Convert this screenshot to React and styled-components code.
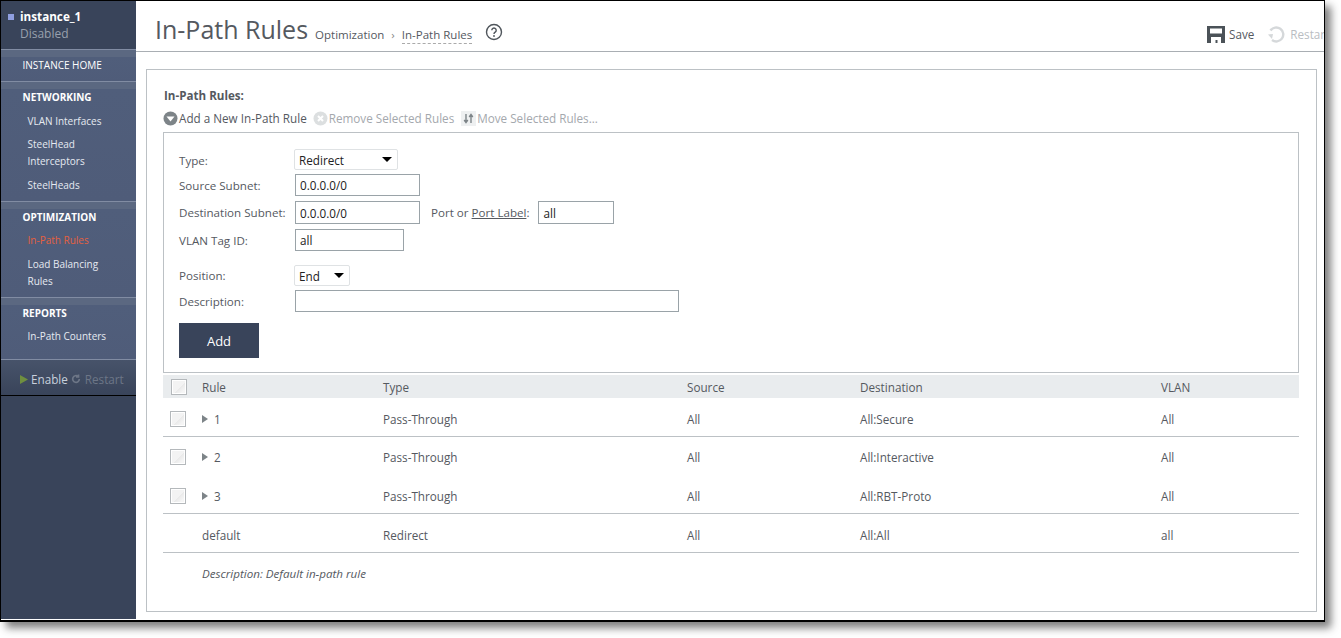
import React from "react";
import styled, { createGlobalStyle } from "styled-components";

const Global = createGlobalStyle`
  html, body { margin: 0; padding: 0; background: #fff; overflow: hidden; }
  body { font-family: "Open Sans", "Liberation Sans", sans-serif; color: #55595f; }
  * { box-sizing: border-box; }
`;

const Page = styled.div`
  width: 1341px;
  height: 638px;
`;
const Window = styled.div`
  width: 1325px;
  height: 622px;
  display: flex;
  background: #fff;
  border: 1px solid #000;
  border-bottom-width: 2px;
  box-shadow: 6px 6px 8px rgba(50, 50, 50, 0.62);
  overflow: hidden;
`;
const Sidebar = styled.aside`
  width: 135px;
  height: 618px;
  flex: none;
  background: #39445a;
  display: flex;
  flex-direction: column;
`;
const Instance = styled.div`
  height: 48px;
  padding: 7px 0 0 7px;
  line-height: 17px;
  background: #39445a;
  display: grid;
  grid-template-columns: 12px 1fr;
  align-content: start;
  align-items: center;
`;
const InstanceDot = styled.span`
  width: 6px;
  height: 6px;
  background: #8f9fe0;
`;
const InstanceName = styled.span`
  color: #fff;
  font-size: 11.7px;
  font-weight: 700;
`;
const InstanceState = styled.span`
  grid-column: 2;
  color: #98a0ad;
  font-size: 12px;
`;
const Section = styled.section`
  height: ${(p) => p.$h}px;
  border-top: 1px solid #818ca3;
  background: linear-gradient(#5b6881 0, #5b6881 7px, #505e7b 7px, #4f5c79 100%);
  padding-top: 7px;
  display: flex;
  flex-direction: column;
`;
const SectionHead = styled.div`
  height: 17px;
  line-height: 17px;
  padding-left: 21.5px;
  font-size: 10px;
  font-weight: ${(p) => (p.$plain ? 400 : 700)};
  color: #fff;
  margin-bottom: 6px;
`;
const NavItem = styled.div`
  margin-left: 26.5px;
  margin-top: ${(p) => p.$mt || 0}px;
  width: 90px;
  font-size: 10px;
  line-height: 17px;
  color: ${(p) => (p.$active ? "#e4603f" : "#e6eaf1")};
`;
const SideFooter = styled.div`
  height: 37px;
  border-top: 1px solid #818ca3;
  border-bottom: 1px solid #000;
  background: linear-gradient(#47536a, #39445a);
  display: flex;
  align-items: center;
  padding: 3px 0 0 19px;
  font-size: 11.7px;
  color: #c8d0dc;
  gap: 3px;
`;
const Muted = styled.span`
  margin-left: 1px;
  color: #6d7687;
`;
const SideFill = styled.div`
  flex: 1;
  background: #39445a;
`;
const Main = styled.main`
  flex: 1;
  min-width: 0;
  display: flex;
  flex-direction: column;
`;
const TopBar = styled.header`
  height: 51px;
  flex: none;
  border-bottom: 1px solid #a9aeb3;
  display: flex;
  align-items: flex-start;
  padding-left: 19px;
  white-space: nowrap;
`;
const Title = styled.h1`
  margin: 10px 0 0;
  font-size: 25px;
  line-height: 36px;
  font-weight: 400;
  color: #55595f;
`;
const Crumbs = styled.div`
  margin: 25px 0 0 7px;
  font-size: 11.5px;
  line-height: 17px;
  color: #55595f;
  display: flex;
`;
const CrumbSep = styled.span`
  margin: 0 7px;
  color: #888;
`;
const CrumbNow = styled.span`
  border-bottom: 1px dashed #aaa;
  height: 18px;
`;
const HelpIcon = styled.svg`
  width: 18px;
  height: 18px;
  margin: 22px 0 0 13px;
`;
const Actions = styled.div`
  margin: 24px 0 0 auto;
  display: flex;
  align-items: center;
  width: 117px;
  flex: none;
  overflow: hidden;
  font-size: 11.7px;
  line-height: 18px;
`;
const ActionIcon = styled.svg`
  width: 18px;
  height: 18px;
  flex: none;
`;
const SaveLabel = styled.span`
  margin: 0 13px 0 4px;
  color: #55595f;
`;
const RestartLabel = styled.span`
  margin-left: 5px;
  color: #b9bdc2;
`;
const Panel = styled.div`
  margin: 17px 7px 0 10px;
  height: 543px;
  border: 1px solid #bcc1c5;
  padding: 17px 17px 0 16px;
`;
const PanelHead = styled.div`
  margin-left: 1px;
  font-size: 11.6px;
  line-height: 18px;
  font-weight: 700;
  color: #55595f;
`;
const Toolbar = styled.div`
  display: flex;
  align-items: center;
  height: 18px;
  margin-top: 4px;
  font-size: 11.7px;
  white-space: nowrap;
`;
const ToolIcon = styled.svg`
  width: 15px;
  height: 15px;
  flex: none;
  margin-right: 1px;
`;
const Tool = styled.span`
  color: ${(p) => (p.$off ? "#a4a8ad" : "#55595f")};
  margin-right: ${(p) => p.$mr || 0}px;
`;
const FormBox = styled.div`
  margin-top: 5px;
  height: 241px;
  border: 1px solid #bcc1c5;
  padding: 16px 0 0 15px;
`;
const Row = styled.div`
  display: flex;
  align-items: center;
  height: ${(p) => p.$h}px;
  margin-top: ${(p) => p.$mt || 0}px;
  font-size: 11.6px;
`;
const Label = styled.label`
  width: 116px;
  flex: none;
  padding-top: ${(p) => (p.$low ? 2 : 0)}px;
  color: #55595f;
`;
const Input = styled.input`
  width: ${(p) => p.$w}px;
  height: ${(p) => p.$ih || 22}px;
  margin: 0;
  padding: 0 4px;
  border: 1px solid #9aa3a8;
  background: #fff;
  font: 11.7px "Open Sans", sans-serif;
  color: #222;
  outline: none;
`;
const SelectBox = styled.div`
  width: ${(p) => p.$w}px;
  height: 21px;
  margin-left: -1px;
  border: 1px solid #dfe2e4;
  border-radius: 2px;
  display: flex;
  align-items: center;
  justify-content: space-between;
  padding: 0 5px 0 4px;
  font-size: 11.7px;
  color: #222;
`;
const Caret = styled.span`
  width: 0;
  height: 0;
  border-left: 5px solid transparent;
  border-right: 5px solid transparent;
  border-top: 5px solid #000;
`;
const PortLabel = styled.span`
  margin: 0 9px 0 11px;
  color: #55595f;
`;
const PortLink = styled.span`
  text-decoration: underline;
`;
const AddButton = styled.button`
  display: block;
  margin-top: 11px;
  width: 80px;
  height: 35px;
  border: 0;
  background: #39445a;
  color: #fff;
  font: 13px "Open Sans", sans-serif;
  padding: 0;
`;
const TableHead = styled.div`
  margin-top: 2px;
  display: grid;
  grid-template-columns: 39px 181px 304px 173px 301px 1fr;
  align-items: center;
  height: 23px;
  background: #e9ecee;
  font-size: 11.7px;
  color: #55595f;
`;
const TableRow = styled.div`
  display: grid;
  grid-template-columns: 39px 181px 304px 173px 301px 1fr;
  align-items: center;
  height: ${(p) => p.$h}px;
  padding-top: ${(p) => (p.$line ? 3 : 2)}px;
  border-bottom: ${(p) => (p.$line ? "1px solid #bcc1c5" : "0")};
  font-size: 11.7px;
  color: #55595f;
`;
const Check = styled.span`
  display: block;
  width: 16px;
  height: 16px;
  margin-left: ${(p) => p.$ml}px;
  border: 1px solid #b4b8bb;
  box-shadow: inset 0 0 0 1px #fff;
  background: linear-gradient(135deg, #f3f3f3 55%, #e9e9e9 55%, #f5f5f5 80%);
`;
const RuleCell = styled.span`
  display: flex;
  align-items: center;
`;
const Arrow = styled.span`
  width: 0;
  height: 0;
  margin-right: 6px;
  border-top: 4px solid transparent;
  border-bottom: 4px solid transparent;
  border-left: 6px solid #7d8488;
`;
const Note = styled.div`
  margin: 12px 0 0 39px;
  font-size: 11.6px;
  line-height: 17px;
  font-style: italic;
  color: #55595f;
`;

const rows = [
  { id: "1", dest: "All:Secure", h: 39, line: true },
  { id: "2", dest: "All:Interactive", h: 38 },
  { id: "3", dest: "All:RBT-Proto", h: 39, line: true },
];

const Nav = () => (
  <Sidebar>
    <Instance>
      <InstanceDot />
      <InstanceName>instance_1</InstanceName>
      <InstanceState>Disabled</InstanceState>
    </Instance>
    <Section $h={32}>
      <SectionHead $plain>INSTANCE HOME</SectionHead>
    </Section>
    <Section $h={120}>
      <SectionHead>NETWORKING</SectionHead>
      <NavItem $mt={1}>VLAN Interfaces</NavItem>
      <NavItem $mt={6}>SteelHead Interceptors</NavItem>
      <NavItem $mt={7}>SteelHeads</NavItem>
    </Section>
    <Section $h={96}>
      <SectionHead>OPTIMIZATION</SectionHead>
      <NavItem $active>In-Path Rules</NavItem>
      <NavItem $mt={7}>Load Balancing Rules</NavItem>
    </Section>
    <Section $h={62}>
      <SectionHead>REPORTS</SectionHead>
      <NavItem>In-Path Counters</NavItem>
    </Section>
    <SideFooter>
      <svg width="8" height="9" viewBox="0 0 8 9"><path d="M0 0l8 4.5L0 9z" fill="#6f8f3f" /></svg>
      <span>Enable</span>
      <svg width="10" height="10" viewBox="0 0 24 24" fill="none" stroke="#6d7687" strokeWidth="4"><path d="M20 12a8 8 0 1 1-3-6.2" /><path d="M18 1v6h-6" /></svg>
      <Muted>Restart</Muted>
    </SideFooter>
    <SideFill />
  </Sidebar>
);

export default function App() {
  return (
    <Page>
      <Global />
      <Window>
        <Nav />
        <Main>
          <TopBar>
            <Title>In-Path Rules</Title>
            <Crumbs>
              <span>Optimization</span>
              <CrumbSep>›</CrumbSep>
              <CrumbNow>In-Path Rules</CrumbNow>
            </Crumbs>
            <HelpIcon viewBox="0 0 18 18" fill="none">
              <circle cx="9" cy="9" r="7.5" stroke="#4f555b" strokeWidth="1.4" />
              <path d="M6.8 7.2a2.2 2.2 0 1 1 3.4 1.9c-.8.5-1.2.9-1.2 1.8" stroke="#4f555b" strokeWidth="1.4" />
              <circle cx="9" cy="13" r=".9" fill="#4f555b" />
            </HelpIcon>
            <Actions>
              <ActionIcon viewBox="0 0 18 18">
                <path d="M0 1h18v17h-4v-6H4v6H0z" fill="#4b5258" />
                <path d="M3 3.5h12v5H3z" fill="#fff" />
                <path d="M5 13.5h8V18H5z" fill="#fff" />
                <path d="M8.5 15h2v3h-2z" fill="#4b5258" />
              </ActionIcon>
              <SaveLabel>Save</SaveLabel>
              <ActionIcon viewBox="0 0 18 18" fill="none" stroke="#d5d8da" strokeWidth="2.4">
                <path d="M3.5 5.5A7 7 0 1 1 5 15" />
                <path d="M1 9.5l4 4.5 1-5z" fill="#d5d8da" stroke="none" />
              </ActionIcon>
              <RestartLabel>Restart</RestartLabel>
            </Actions>
          </TopBar>
          <Panel>
            <PanelHead>In-Path Rules:</PanelHead>
            <Toolbar>
              <ToolIcon viewBox="0 0 15 15">
                <circle cx="7.5" cy="7.5" r="7" fill="#7d8488" />
                <path d="M3.5 5.5h8L7.5 10.5z" fill="#fff" />
              </ToolIcon>
              <Tool $mr={6}>Add a New In-Path Rule</Tool>
              <ToolIcon viewBox="0 0 15 15">
                <circle cx="7.5" cy="7.5" r="7" fill="#dcdfe0" />
                <path d="M5 5l5 5M10 5l-5 5" stroke="#fff" strokeWidth="2" />
              </ToolIcon>
              <Tool $off $mr={7}>Remove Selected Rules</Tool>
              <ToolIcon viewBox="0 0 15 15">
                <path d="M0 0h15v15H0z" fill="#eef0f1" />
                <path d="M5 3v8M3.2 9l1.8 2.5L6.8 9M10 12V4M8.2 6L10 3.5 11.8 6" stroke="#7d8488" strokeWidth="1.4" fill="none" />
              </ToolIcon>
              <Tool $off>Move Selected Rules...</Tool>
            </Toolbar>
            <FormBox>
              <Row $h={21}>
                <Label $low>Type:</Label>
                <SelectBox $w={104}>Redirect<Caret /></SelectBox>
              </Row>
              <Row $h={22} $mt={4}>
                <Label>Source Subnet:</Label>
                <Input $w={125} defaultValue="0.0.0.0/0" />
              </Row>
              <Row $h={23} $mt={5}>
                <Label>Destination Subnet:</Label>
                <Input $w={125} $ih={23} defaultValue="0.0.0.0/0" />
                <PortLabel>Port or <PortLink>Port Label</PortLink>:</PortLabel>
                <Input $w={76} $ih={23} defaultValue="all" />
              </Row>
              <Row $h={22} $mt={5}>
                <Label>VLAN Tag ID:</Label>
                <Input $w={109} defaultValue="all" />
              </Row>
              <Row $h={21} $mt={14}>
                <Label>Position:</Label>
                <SelectBox $w={56}>End<Caret /></SelectBox>
              </Row>
              <Row $h={22} $mt={4}>
                <Label>Description:</Label>
                <Input $w={384} />
              </Row>
              <AddButton>Add</AddButton>
            </FormBox>
            <TableHead>
              <Check $ml={8} />
              <span>Rule</span>
              <span>Type</span>
              <span>Source</span>
              <span>Destination</span>
              <span>VLAN</span>
            </TableHead>
            {rows.map((r) => (
              <TableRow key={r.id} $h={r.h} $line={r.line}>
                <Check $ml={7} />
                <RuleCell><Arrow />{r.id}</RuleCell>
                <span>Pass-Through</span>
                <span>All</span>
                <span>{r.dest}</span>
                <span>All</span>
              </TableRow>
            ))}
            <TableRow $h={39} $line>
              <span />
              <span>default</span>
              <span>Redirect</span>
              <span>All</span>
              <span>All:All</span>
              <span>all</span>
            </TableRow>
            <Note>Description: Default in-path rule</Note>
          </Panel>
        </Main>
      </Window>
    </Page>
  );
}
